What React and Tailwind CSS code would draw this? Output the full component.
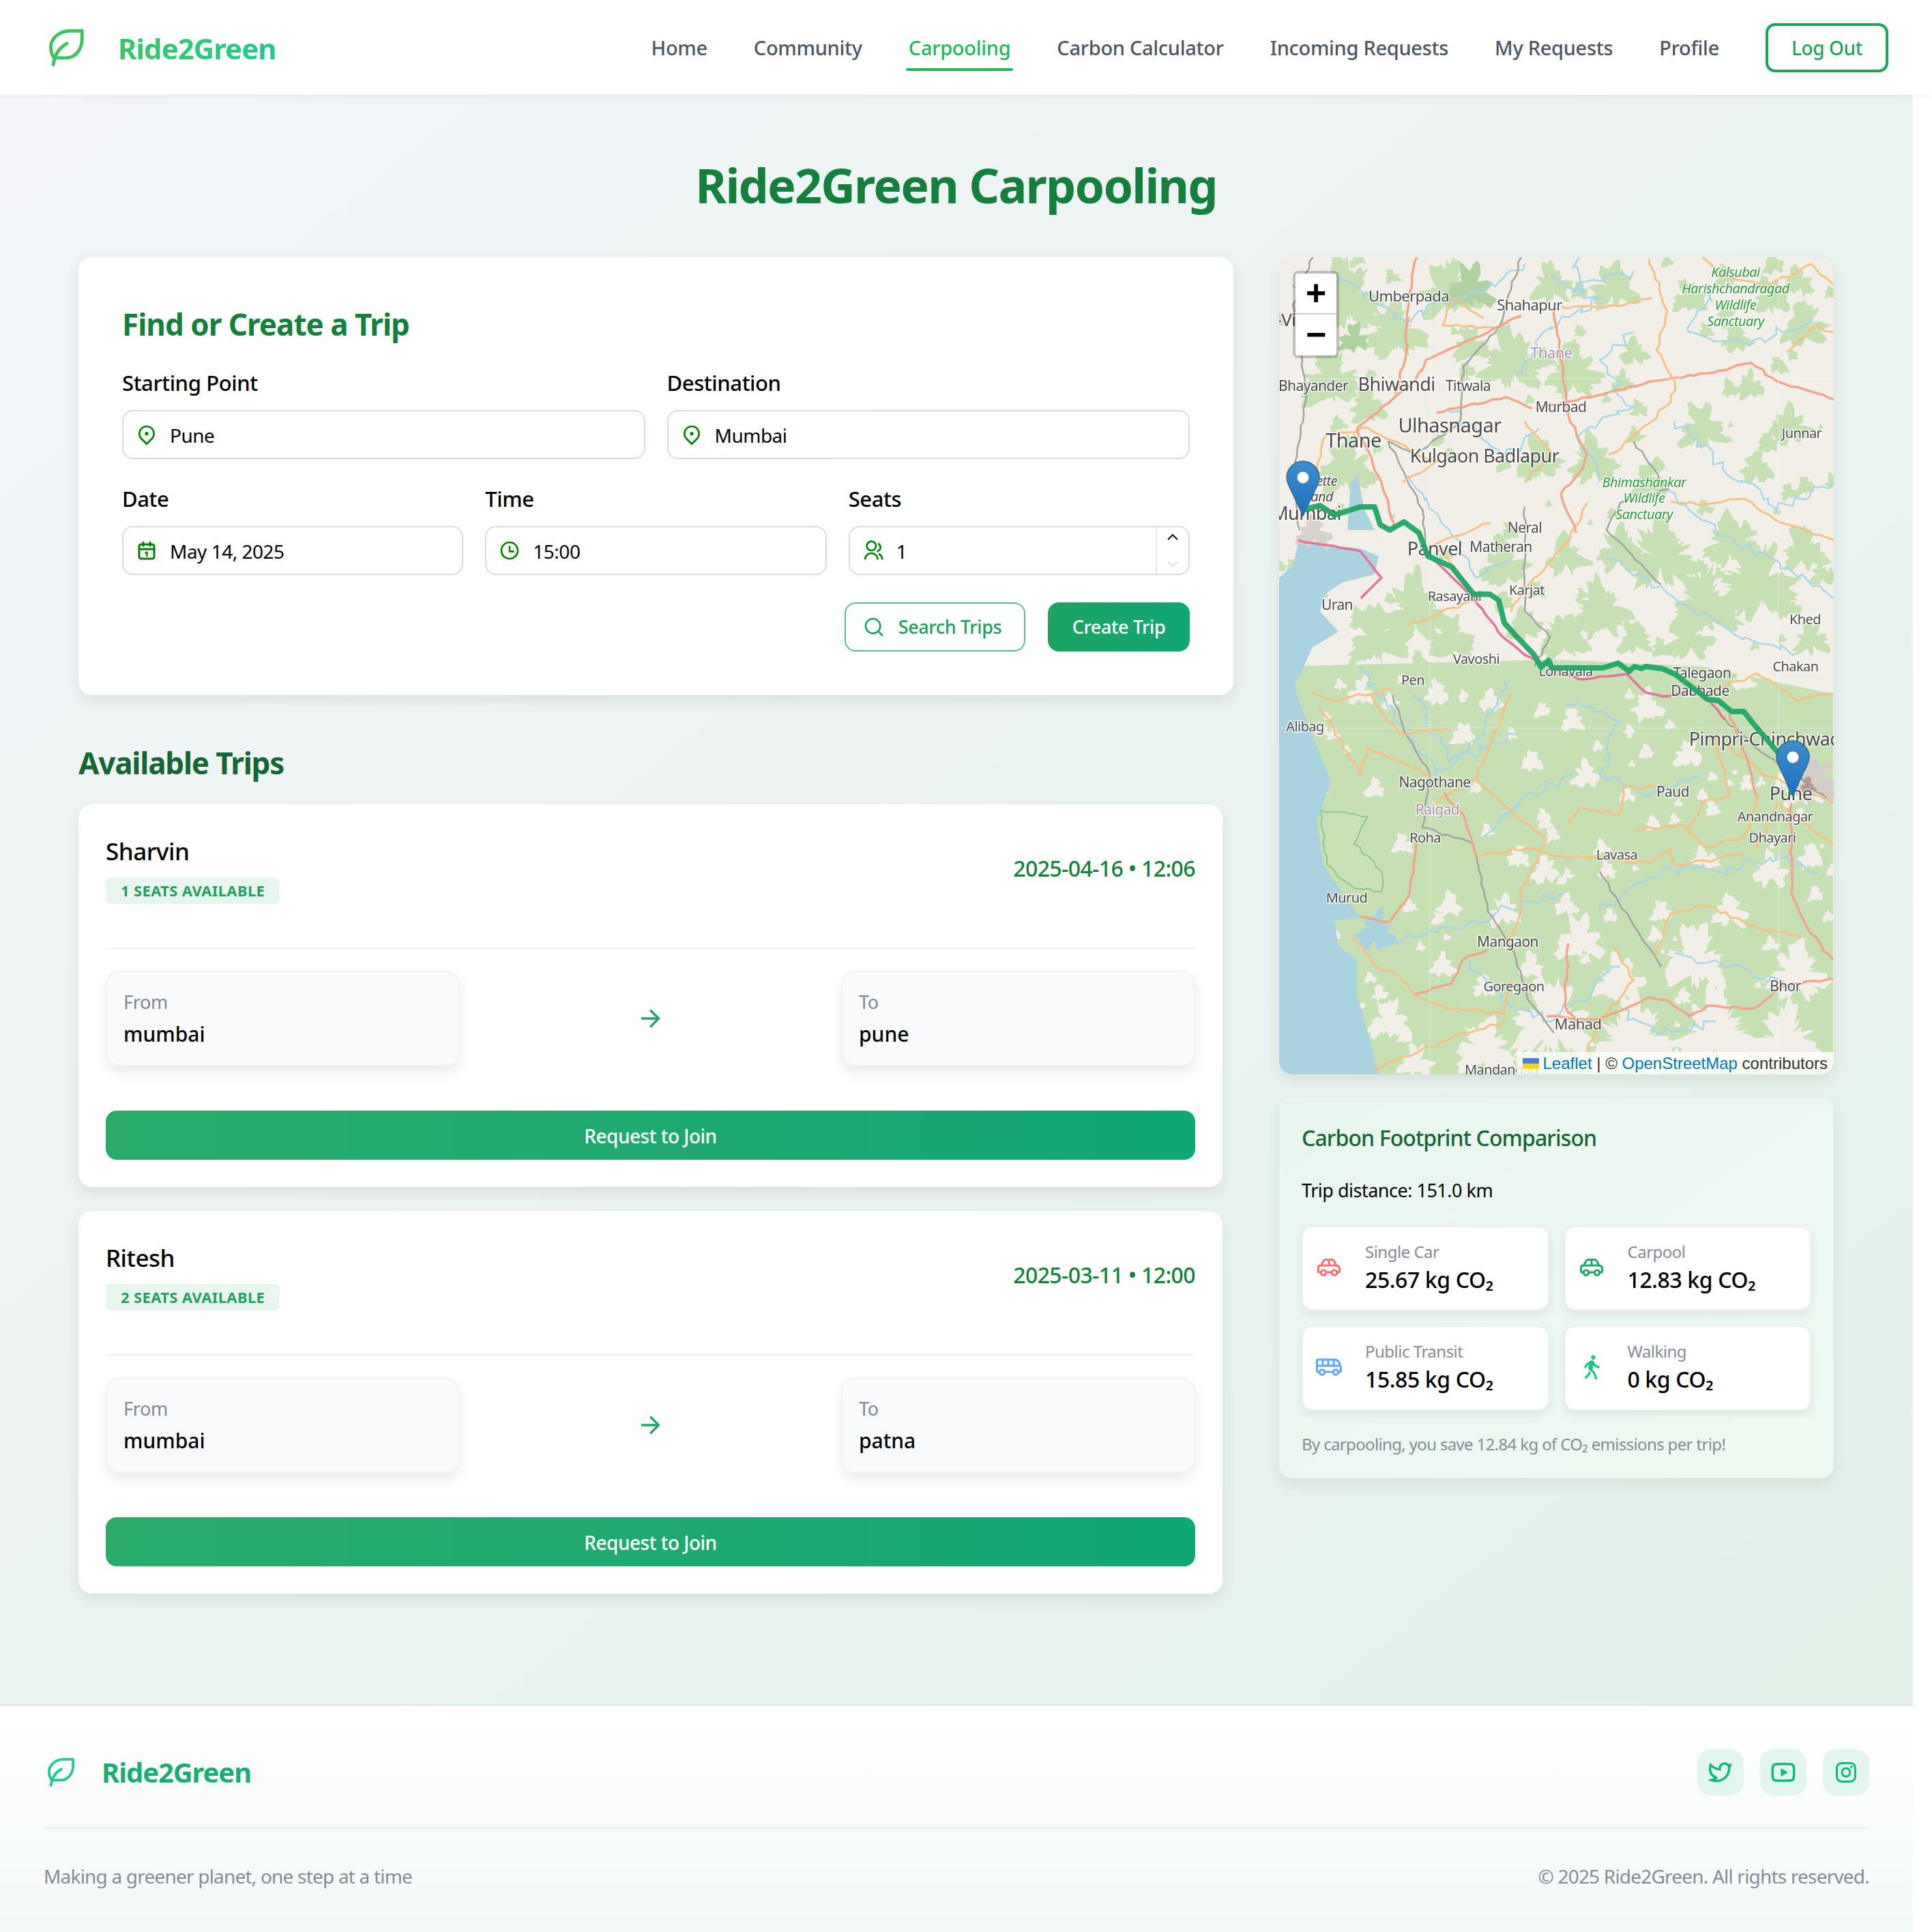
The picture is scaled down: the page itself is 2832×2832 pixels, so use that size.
import {
  RiMapPin2Line,
  RiTimeLine,
  RiGroupLine,
  RiSearchLine,
  RiArrowRightLine,
  RiWalkFill,
  RiTwitterLine,
  RiYoutubeLine,
  RiInstagramLine,
} from "react-icons/ri";

// SMALL SEEDED RANDOM, SO THE MAP IS THE SAME ON EVERY RENDER
const rng = (seed) => {
  let s = seed;
  return () => {
    s = (s * 16807) % 2147483647;
    return (s - 1) / 2147483646;
  };
};

// ROUGH CLOSED SHAPE FOR WOODS AND FIELDS
const blob = (cx, cy, r, seed) => {
  const rand = rng(seed * 97 + 13);
  const pts = [];
  const n = Math.max(10, Math.round(r * 1.2));
  const p1 = rand() * 6;
  const p2 = rand() * 6;
  for (let i = 0; i < n; i++) {
    const a = (i / n) * Math.PI * 2;
    const rr = r * (0.72 + 0.2 * Math.sin(a * 3 + p1) + 0.14 * Math.sin(a * 7 + p2) + (rand() - 0.5) * 0.34);
    pts.push(`${(cx + Math.cos(a) * rr).toFixed(1)},${(cy + Math.sin(a) * rr).toFixed(1)}`);
  }
  return `M${pts.join("L")}Z`;
};

// WOBBLY LINE FOR ROADS AND RIVERS
const wiggle = (points, amp, seed) => {
  const rand = rng(seed * 131 + 7);
  let d = `M${points[0][0]},${points[0][1]}`;
  for (let i = 1; i < points.length; i++) {
    const [x0, y0] = points[i - 1];
    const [x1, y1] = points[i];
    const steps = Math.max(1, Math.round(Math.hypot(x1 - x0, y1 - y0) / 10));
    for (let k = 1; k <= steps; k++) {
      const t = k / steps;
      const j = k === steps ? 0 : amp;
      d += `L${(x0 + (x1 - x0) * t + (rand() - 0.5) * j).toFixed(1)},${(y0 + (y1 - y0) * t + (rand() - 0.5) * j).toFixed(1)}`;
    }
  }
  return d;
};

// SCATTER SMALL PATCHES OVER A BOX
const scatter = (count, x0, y0, x1, y1, rMin, rMax, seed) => {
  const rand = rng(seed);
  return Array.from({ length: count }, () => [x0 + rand() * (x1 - x0), y0 + rand() * (y1 - y0), rMin + rand() * (rMax - rMin)]);
};

const NORTH_GREEN = [
  [100, 60, 60], [170, 110, 50], [250, 50, 50], [75, 180, 50], [340, 155, 55], [430, 170, 48], [490, 45, 40],
  [600, 60, 30], [770, 100, 40], [520, 140, 25], [100, 310, 50], [620, 250, 40], [380, 300, 40], [460, 300, 40],
  [700, 310, 30], [720, 60, 30], [760, 35, 25], [660, 420, 45], [560, 440, 60], [620, 510, 60], [700, 480, 70],
  [470, 520, 50], [500, 430, 40], [770, 430, 40], [780, 560, 30], [600, 560, 40], [200, 520, 60], [140, 560, 50],
  [250, 560, 40], [330, 450, 40], [420, 440, 35], [130, 220, 30], [280, 130, 30], [400, 40, 35], [670, 120, 25],
  [420, 560, 40], [520, 560, 30], [360, 540, 30], [750, 250, 35], [690, 190, 25], [540, 330, 30],
  ...scatter(110, 0, 0, 813, 600, 5, 20, 211),
];
const SOUTH_LAND = [
  [400, 1120, 70], [520, 1150, 70], [640, 1140, 70], [740, 1150, 60], [610, 1030, 55], [660, 960, 30], [760, 1050, 50],
  [300, 1160, 50], [440, 1000, 40], [500, 1060, 40], [250, 950, 22], [330, 960, 28], [160, 1120, 35], [200, 1180, 30],
  [390, 900, 25], [420, 950, 20], [350, 880, 20], [270, 700, 22], [230, 640, 22], [310, 650, 20], [120, 640, 22],
  [370, 740, 20], [450, 760, 24], [540, 660, 28], [430, 680, 20], [600, 730, 25], [720, 900, 30], [680, 620, 20],
  [770, 780, 30], [560, 960, 20], [480, 900, 16], [240, 1040, 22], [300, 1070, 20], [180, 860, 18], [140, 780, 18],
  [620, 880, 18], [780, 880, 22], [100, 1100, 22], [370, 1040, 22], [80, 700, 12],
  ...scatter(90, 60, 610, 813, 1198, 4, 15, 977),
];
const ORANGE_ROADS = [
  [[542, 2], [569, 79], [553, 136], [580, 182], [574, 213], [520, 262], [483, 289]],
  [[547, 60], [494, 71], [414, 73]],
  [[574, 358], [628, 362], [681, 354], [735, 389], [815, 415]],
  [[452, 360], [420, 420], [366, 480], [340, 520]],
  [[167, 634], [76, 650], [49, 638]],
  [[290, 765], [349, 820], [392, 852], [360, 919], [349, 978], [333, 1010]],
  [[296, 877], [371, 866], [403, 878], [547, 887], [574, 868], [580, 891], [681, 876]],
  [[520, 840], [590, 832], [622, 864], [681, 852], [703, 789]],
  [[553, 1026], [574, 962], [628, 951], [708, 986], [767, 996]],
  [[424, 836], [440, 808], [499, 816], [505, 777], [553, 777]],
  [[108, 994], [146, 1042], [172, 1050], [199, 1081]],
  [[199, 1081], [240, 1100], [330, 1110], [340, 1060]],
  [[140, 1190], [240, 1150], [330, 1120]],
  [[300, 90], [255, 60], [240, 100], [322, 105]],
  [[630, 640], [700, 610], [760, 650], [812, 640]],
  [[640, 700], [710, 760], [812, 800]],
  [[50, 330], [70, 260], [130, 250], [230, 300], [180, 330]],
  [[190, 540], [290, 500], [230, 420], [310, 390]],
  [[60, 660], [120, 760], [130, 720], [220, 760]],
  [[720, 40], [780, 10], [812, 40]],
  [[745, 140], [790, 100], [812, 110]],
  [[620, 0], [655, 30], [720, 40]],
  [[700, 870], [730, 800], [812, 860]],
  [[360, 240], [400, 290], [360, 330]],
  [[250, 690], [180, 700], [130, 640]],
  [[340, 640], [290, 760], [230, 800]],
  [[640, 700], [660, 790], [620, 800], [600, 850]],
  [[440, 1190], [470, 1120], [520, 1060], [490, 1010]],
];
const RED_ROADS = [
  [[202, 0], [190, 55], [185, 150], [170, 200]],
  [[355, 86], [322, 102], [215, 151], [199, 182], [114, 251]],
  [[376, 222], [563, 180], [628, 170], [692, 155], [730, 182], [815, 209]],
  [[231, 228], [333, 205], [371, 222]],
  [[403, 75], [419, 190], [424, 232], [451, 289], [446, 308], [413, 347], [435, 404]],
  [[751, 800], [751, 931], [778, 990], [812, 1030]],
  [[569, 1089], [601, 1113], [628, 1097], [697, 1101], [735, 1069], [812, 1057]],
  [[569, 1089], [542, 1085], [467, 1117], [392, 1113]],
  [[242, 785], [269, 816], [290, 880]],
  [[205, 852], [189, 939], [162, 974], [119, 967]],
  [[199, 1081], [253, 1065], [269, 1030], [306, 1014]],
  [[424, 1006], [419, 1097], [440, 1129]],
  [[114, 250], [150, 330], [170, 400]],
  [[660, 670], [690, 750], [700, 790]],
];
const PINK_ROADS = [
  [[440, 619], [510, 611], [537, 638], [563, 644], [617, 634], [654, 678]],
  [[28, 415], [119, 431], [150, 470], [120, 500]],
  [[226, 442], [285, 500], [328, 557], [360, 583], [440, 619]],
];
const GRAY_LINES = [
  [[167, 642], [183, 694], [221, 757], [210, 836], [285, 860], [306, 959], [344, 1018], [365, 1089], [403, 1137]],
  [[360, 366], [360, 519], [397, 557], [375, 600]],
  [[50, 0], [20, 70], [40, 200], [20, 320], [30, 400]],
  [[355, 0], [322, 102], [270, 160], [265, 240], [200, 290], [160, 270]],
  [[160, 270], [210, 370], [215, 440]],
  [[654, 678], [700, 720], [812, 800]],
  [[520, 270], [570, 340], [500, 360], [480, 400], [560, 480]],
  [[470, 900], [520, 980], [560, 1040]],
];
const RIVERS = [
  [[20, 40], [90, 30], [180, 90], [300, 50], [360, 10]],
  [[400, 30], [470, 60], [380, 120], [350, 170]],
  [[520, 110], [470, 150], [520, 220], [440, 260], [470, 330]],
  [[640, 40], [600, 110], [690, 130], [780, 90]],
  [[580, 240], [650, 310], [730, 370], [812, 330]],
  [[560, 340], [640, 400], [720, 440], [812, 500]],
  [[480, 440], [580, 500], [680, 560], [760, 580]],
  [[120, 600], [170, 670], [230, 760], [300, 700], [330, 620]],
  [[420, 650], [500, 680], [470, 760], [540, 790], [620, 760]],
  [[300, 850], [360, 790], [430, 760]],
  [[470, 960], [560, 900], [640, 900], [720, 880], [790, 900]],
  [[580, 1020], [680, 1040], [760, 1080]],
  [[140, 1010], [230, 990], [320, 960], [420, 930]],
  [[280, 1030], [330, 1090], [400, 1120], [500, 1040]],
  [[190, 320], [250, 400], [290, 470], [340, 440]],
  [[640, 1120], [560, 1140], [500, 1100]],
  [[250, 220], [330, 290], [380, 250]],
  [[440, 0], [430, 50], [520, 20]],
  [[200, 640], [250, 740], [350, 700]],
];
const SEA =
  "M0,470L20,452L28,419L65,421L119,427L146,438L140,465L92,477L65,496L60,519L87,549L49,572L22,630L49,702L76,769L55,828L65,891L97,939L119,968L81,972L87,1010L114,1030L114,1081L130,1137L146,1198L0,1198Z";
const ROUTE =
  "36,370 60,364 81,378 119,366 140,366 148,392 162,400 183,388 205,404 218,438 253,454 285,494 309,494 322,503 330,536 349,557 373,582 384,601 395,591 400,602 422,602 475,602 497,595 513,607 521,600 531,603 537,600 561,603 580,611 628,648 644,650 663,666 681,666 697,686 732,727 752,785";

// PLACE LABELS: [TEXT, X, Y, SIZE]
const PLACES = [
  ["Umberpada", 190, 65, 22], ["Shahapur", 367, 78, 22], ["Bhayander", 50, 196, 21], ["Bhiwandi", 172, 196, 27],
  ["Titwala", 277, 196, 21], ["Murbad", 413, 227, 21], ["Ulhasnagar", 250, 257, 29], ["Thane", 109, 279, 29],
  ["Kulgaon Badlapur", 301, 301, 27], ["Junnar", 766, 265, 20], ["Neral", 360, 404, 21], ["Matheran", 325, 432, 21],
  ["Panvel", 228, 437, 27], ["Karjat", 363, 495, 20], ["Rasayani", 257, 504, 20], ["Uran", 85, 517, 21],
  ["Khed", 771, 538, 20], ["Vavoshi", 289, 596, 20], ["Lonavala", 420, 614, 20], ["Talegaon", 620, 617, 21],
  ["Chakan", 757, 607, 20], ["Dabhade", 617, 643, 21], ["Pen", 196, 627, 20], ["Alibag", 38, 695, 20],
  ["Pimpri-Chinchwad", 712, 716, 27], ["Nagothane", 228, 777, 21], ["Paud", 577, 791, 21], ["Pune", 750, 796, 27],
  ["Anandnagar", 727, 827, 20], ["Dhayari", 723, 858, 20], ["Roha", 214, 858, 20], ["Lavasa", 495, 883, 20],
  ["Murud", 99, 946, 20], ["Mangaon", 335, 1011, 21], ["Goregaon", 344, 1076, 20], ["Bhor", 742, 1076, 21],
  ["Mahad", 438, 1132, 22], ["Mandangad", 326, 1198, 20], ["Mumbai", 40, 385, 27], ["-Vi", 10, 101, 26],
];
const PURPLE_PLACES = [["Thane", 399, 148, 22], ["Raigad", 232, 817, 21]];
const PARKS = [
  ["Kalsubai", 669, 29], ["Harishchandragad", 669, 53], ["Wildlife", 669, 77], ["Sanctuary", 669, 101],
  ["Bhimashankar", 535, 337], ["Wildlife", 535, 360], ["Sanctuary", 535, 384],
];

const Marker = ({ x, y }) => (
  <g transform={`translate(${x} ${y})`}>
    <path
      d="M25 1C12 1 1 12 1 25c0 6 3 12 7 20l17 36 17-36c4-8 7-14 7-20C49 12 38 1 25 1z"
      fill="url(#markerFill)"
      stroke="#2e6c97"
      strokeWidth="1.5"
    />
    <circle cx="25" cy="25" r="8.5" fill="#fff" />
  </g>
);

const RouteMap = () => (
  <div className="relative h-[1198px] w-[813px] overflow-hidden rounded-[20px] shadow-[0_8px_20px_rgba(0,0,0,0.08)]">
    {/* MAP DRAWING */}
    <svg width="813" height="1198" viewBox="0 0 813 1198" className="block">
      <defs>
        <linearGradient id="markerFill" x1="0" y1="0" x2="0" y2="1">
          <stop offset="0" stopColor="#3d8ec9" />
          <stop offset="1" stopColor="#1f6fc0" />
        </linearGradient>
      </defs>
      <rect width="813" height="1198" fill="#f2efe9" />
      <g className="blur-[0.7px]">
        {/* SOUTH IS MOSTLY WOODS, NORTH MOSTLY OPEN */}
        <path d="M0,600L400,590L620,600L812,640L812,1198L0,1198Z" fill="#c6dfb3" />
        {SOUTH_LAND.map(([x, y, r], i) => (
          <path key={i} d={blob(x, y, r, i + 1)} fill="#f2efe9" />
        ))}
        {NORTH_GREEN.map(([x, y, r], i) => (
          <path key={i} d={blob(x, y, r, i + 60)} fill="#c6dfb3" />
        ))}
        <path d={blob(280, 45, 40, 9)} fill="#afd29f" />
        <path d={blob(110, 120, 26, 5)} fill="#afd29f" />
        <path
          d={wiggle([[60, 810], [130, 820], [110, 860], [150, 900], [150, 930], [110, 925], [70, 890], [60, 810]], 5, 4)}
          fill="#c9e1b6"
          stroke="#8fc78a"
          strokeWidth="2"
        />
        <path d={SEA} fill="#aad3df" />
        <path d="M100,400L105,330L115,320L125,370L140,400Z" fill="#aad3df" />
        <path d={blob(142, 990, 34, 8)} fill="#aad3df" />
        {/* BUILT-UP PATCHES */}
        <path d={blob(785, 770, 40, 2)} fill="#d3cfc8" />
        <path d={blob(50, 405, 30, 6)} fill="#d6d2cc" />
        <path d={blob(775, 775, 14, 12)} fill="#b79a86" />
        {RIVERS.map((p, i) => (
          <path key={i} d={wiggle(p, 16, i + 30)} fill="none" stroke="#a9d6e6" strokeWidth="2.5" />
        ))}
        {GRAY_LINES.map((p, i) => (
          <path key={i} d={wiggle(p, 4, i + 20)} fill="none" stroke="#a3a39e" strokeWidth="2.5" />
        ))}
        {ORANGE_ROADS.map((p, i) => (
          <path key={i} d={wiggle(p, 6, i + 40)} fill="none" stroke="#f6c184" strokeWidth="3" />
        ))}
        {RED_ROADS.map((p, i) => (
          <path key={i} d={wiggle(p, 4, i + 70)} fill="none" stroke="#f1a68a" strokeWidth="3.5" />
        ))}
        {PINK_ROADS.map((p, i) => (
          <path key={i} d={wiggle(p, 2, i + 90)} fill="none" stroke="#e2749a" strokeWidth="3.5" />
        ))}
        {/* TILE SEAMS */}
        <path d="M221,0V1198M732,0V1198M0,178H813M0,690H813" stroke="#fff" strokeOpacity="0.45" strokeWidth="1" />
        {/* LABELS */}
        <g
          textAnchor="middle"
          fontFamily="'Noto Sans', sans-serif"
          fill="#4a4a4a"
          stroke="#ffffff"
          strokeOpacity="0.75"
          strokeWidth="3"
          paintOrder="stroke"
          letterSpacing="-0.6"
        >
          {PLACES.map(([t, x, y, s]) => (
            <text key={t + x} x={x} y={y} fontSize={s}>
              {t}
            </text>
          ))}
          <text x="85" y="335" fontSize="20" textAnchor="end" fontStyle="italic">Salsette</text>
          <text x="79" y="358" fontSize="20" textAnchor="end" fontStyle="italic">Island</text>
          {PURPLE_PLACES.map(([t, x, y, s]) => (
            <text key={t + x} x={x} y={y} fontSize={s} fill="#a98fb0">
              {t}
            </text>
          ))}
          {PARKS.map(([t, x, y]) => (
            <text key={t + y} x={x} y={y} fontSize="20" fontStyle="italic" fill="#2f9a3c">
              {t}
            </text>
          ))}
        </g>
      </g>
      {/* ROUTE AND MARKERS */}
      <polyline points={ROUTE} fill="none" stroke="#22a566" strokeOpacity="0.95" strokeWidth="8" strokeLinejoin="round" strokeLinecap="round" />
      <Marker x={10} y={298} />
      <Marker x={728} y={708} />
    </svg>
    {/* ZOOM CONTROL */}
    <div className="absolute left-[20px] top-[20px] flex w-[68px] flex-col rounded-[8px] border-4 border-black/20 bg-clip-padding font-['Liberation_Mono',monospace] text-[52px] font-bold leading-none text-black">
      <span className="flex h-[60px] items-center justify-center rounded-t-[4px] border-b-2 border-[#cccccc] bg-white pt-[8px]">+</span>
      <span className="flex h-[60px] items-center justify-center rounded-b-[4px] bg-white pt-[8px]">−</span>
    </div>
    {/* ATTRIBUTION */}
    <div className="absolute bottom-0 right-0 flex h-[33px] items-center gap-[7px] bg-white/80 pl-[9px] pr-[9px] font-['Liberation_Sans',sans-serif] text-[24px] text-[#333333]">
      <svg width="24" height="16" viewBox="0 0 12 8" className="mr-[-1px]">
        <rect width="12" height="4" fill="#4C7BE1" />
        <rect y="4" width="12" height="4" fill="#FFD500" />
      </svg>
      <span>
        <span className="text-[#0078a8]">Leaflet</span> | © <span className="text-[#0078a8]">OpenStreetMap</span> contributors
      </span>
    </div>
  </div>
);

// ICONS THE PACKAGES HAVE NO MATCH FOR
const LeafIcon = ({ className }) => (
  <svg viewBox="0 0 42 44" fill="none" stroke="currentColor" strokeWidth="4" strokeLinecap="round" strokeLinejoin="round" className={className}>
    <path d="M39 2H25C11 2 2 12 2 21c0 5 1 9 4 13h14C32 34 39 23 39 11Z" />
    <path d="M5 42c1-9 5-19 16-25" />
  </svg>
);

const CalendarIcon = ({ className }) => (
  <svg viewBox="0 0 26 28" fill="none" stroke="currentColor" strokeWidth="3" strokeLinecap="round" strokeLinejoin="round" className={className}>
    <rect x="2" y="5" width="22" height="21" rx="3" />
    <path d="M2 12h22M8 2v5M18 2v5" />
    <path d="M11.5 17.5 13.5 16.5V22" strokeWidth="2.4" />
  </svg>
);

const CarIcon = ({ className }) => (
  <svg viewBox="0 0 34 26" fill="none" stroke="currentColor" strokeWidth="3" strokeLinecap="round" strokeLinejoin="round" className={className}>
    <path d="M5 20H3a1.5 1.5 0 0 1-1.5-1.5V13c0-2 1-3 3-3h1L9 3.5C9.7 2 10.5 1.5 12 1.5h9.5c1.3 0 2 .5 2.8 1.6L28 10c3 .5 4.5 1.8 4.5 4v4.5A1.5 1.5 0 0 1 31 20h-2M13 20h8" />
    <path d="M6 10h22M17 2v8" />
    <circle cx="9" cy="20.5" r="3.7" />
    <circle cx="25" cy="20.5" r="3.7" />
  </svg>
);

const BusIcon = ({ className }) => (
  <svg viewBox="0 0 38 26" fill="none" stroke="currentColor" strokeWidth="3" strokeLinecap="round" strokeLinejoin="round" className={className}>
    <path d="M5 20H3a1.5 1.5 0 0 1-1.5-1.5v-15A1.5 1.5 0 0 1 3 2h24c4 0 7 3 8.5 8 .6 2 1 4 1 6v2.5A1.5 1.5 0 0 1 35 20h-2M14 20h10" />
    <path d="M2 11h33M10 2v9M18 2v9M26 2v9" />
    <circle cx="9" cy="20.5" r="3.7" />
    <circle cx="29" cy="20.5" r="3.7" />
  </svg>
);

const Field = ({ label, icon: Icon, value, iconClass = "h-[32px] w-[32px]", children }) => (
  <div className="flex min-w-0 flex-1 flex-col">
    <span className="mb-[18px] h-[44px] text-[31px] font-medium leading-[44px] tracking-[-0.4px] text-black">{label}</span>
    <div className="relative flex h-[72px] items-center rounded-[16px] border-2 border-[#d9dce2] bg-white pl-[18px]">
      <span className="flex w-[32px] shrink-0 justify-center text-[#008000]">
        <Icon className={iconClass} />
      </span>
      <span className="ml-[18px] pt-[2px] text-[28px] leading-[40px] tracking-[-0.5px] text-black">{value}</span>
      {children}
    </div>
  </div>
);

const Place = ({ label, value }) => (
  <div className="flex h-[140px] w-[519px] flex-col justify-center rounded-[20px] border-2 border-[#f1f2f5] bg-[#f9fafb] px-[24px] shadow-[0_10px_20px_rgba(0,0,0,0.08)]">
    <span className="text-[27px] leading-[42px] tracking-[-0.3px] text-[#7f8792]">{label}</span>
    <span className="pt-[3px] text-[30px] font-medium leading-[46px] text-black">{value}</span>
  </div>
);

const TripCard = ({ name, seats, when, to }) => (
  <div className="rounded-[20px] bg-white p-[40px] shadow-[0_8px_20px_rgba(0,0,0,0.08)]">
    <div className="flex items-center justify-between border-b-2 border-[#eeeff2] pb-[64px]">
      <div className="flex flex-col items-start">
        <span className="h-[58px] text-[35px] font-medium leading-[58px] tracking-[-0.5px] text-black">{name}</span>
        <span className="mt-[9px] flex h-[39px] items-center rounded-[8px] bg-[#e9f6ef] px-[22px] text-[22px] font-bold tracking-[0.35px] text-[#22a05f]">
          {seats} SEATS AVAILABLE
        </span>
      </div>
      <span className="pt-[2px] text-[32px] font-medium tracking-[-0.6px] text-[#15803d]">{when}</span>
    </div>
    <div className="mt-[32px] flex items-center justify-between">
      <Place label="From" value="mumbai" />
      <RiArrowRightLine className="h-[42px] w-[42px] text-[#22a566]" />
      <Place label="To" value={to} />
    </div>
    <button className="mt-[65px] flex h-[72px] w-full items-center justify-center rounded-[16px] bg-gradient-to-r from-[#2aab6a] to-[#10a676] pt-[2px] text-[28px] font-medium tracking-[-0.5px] text-white">
      Request to Join
    </button>
  </div>
);

const CO2Tile = ({ icon: Icon, iconClass, color, label, value }) => (
  <div className="flex items-center rounded-[16px] border-2 border-[#eef1f0] bg-white pb-[3px] pl-[18px] shadow-[0_6px_14px_rgba(0,0,0,0.07)]">
    <span className="flex w-[40px] shrink-0 justify-center" style={{ color }}>
      <Icon className={iconClass} />
    </span>
    <div className="ml-[33px] flex flex-col">
      <span className="text-[24px] leading-[36px] tracking-[-0.5px] text-[#858b96]">{label}</span>
      <span className="text-[32px] font-medium leading-[46px] tracking-[-0.4px] text-black">{value}</span>
    </div>
  </div>
);

const NAV_LINKS = ["Home", "Community", "Carpooling", "Carbon Calculator", "Incoming Requests", "My Requests", "Profile"];

export default function App() {
  return (
    <div className="flex w-[2832px] flex-col bg-white font-['Noto_Sans',sans-serif]">
      {/* NAVBAR */}
      <nav className="relative z-10 flex h-[139px] items-center justify-between bg-white pl-[72px] pr-[64px] shadow-[0_2px_10px_rgba(0,0,0,0.06)]">
        <div className="flex items-center">
          <LeafIcon className="h-[56px] w-[52px] text-[#3ec45e]" />
          <span className="ml-[49px] bg-gradient-to-r from-[#3cc566] to-[#20c98d] bg-clip-text pt-[2px] text-[42px] font-bold tracking-[-1px] text-transparent">
            Ride2Green
          </span>
        </div>
        <div className="flex items-center gap-[68px]">
          {NAV_LINKS.map((l) =>
            l === "Carpooling" ? (
              <span key={l} className="relative mx-[-4px] px-[4px] text-[29px] font-medium tracking-[-0.3px] text-[#22b85a]">
                {l}
                <span className="absolute bottom-[-13px] left-0 h-[4px] w-full rounded bg-[#22b85a]" />
              </span>
            ) : (
              <span key={l} className="text-[29px] font-medium tracking-[-0.3px] text-[#4b5563]">
                {l}
              </span>
            )
          )}
          <span className="flex h-[72px] w-[180px] items-center justify-center rounded-[14px] border-4 border-[#1fa35c] text-[28px] font-medium tracking-[-0.4px] text-[#1fa35c] shadow-[0_3px_6px_rgba(0,0,0,0.08)]">
            Log Out
          </span>
        </div>
      </nav>

      <div className="pr-[28px]">
        <main className="h-[2359px] bg-gradient-to-br from-[#f3f5f9] to-[#e3f1e9] pl-[115px] pr-[116px] pt-[82px]">
          <h1 className="h-[100px] text-center text-[70px] font-bold leading-[100px] tracking-[-1.8px] text-[#15803d]">Ride2Green Carpooling</h1>
          <div className="mt-[56px] flex gap-[67px]">
            {/* LEFT COLUMN */}
            <div className="w-[1693px]">
              <section className="rounded-[20px] bg-white/95 px-[64px] pb-[64px] pt-[64px] shadow-[0_8px_20px_rgba(0,0,0,0.08)]">
                <h2 className="h-[68px] text-[44px] font-bold leading-[68px] tracking-[-1px] text-[#15803d]">Find or Create a Trip</h2>
                <div className="mt-[30px] flex gap-[32px]">
                  <Field label="Starting Point" icon={RiMapPin2Line} value="Pune" />
                  <Field label="Destination" icon={RiMapPin2Line} value="Mumbai" />
                </div>
                <div className="mt-[36px] flex gap-[32px]">
                  <Field label="Date" icon={CalendarIcon} iconClass="h-[28px] w-[26px]" value="May 14, 2025" />
                  <Field label="Time" icon={RiTimeLine} value="15:00" />
                  <Field label="Seats" icon={RiGroupLine} value="1">
                    {/* NUMBER SPINNER */}
                    <div className="absolute bottom-0 right-0 top-0 flex w-[48px] flex-col items-center justify-between border-l-2 border-[#e7e8ec] py-[6px]">
                      <svg width="18" height="18" viewBox="0 0 18 18" fill="none" stroke="#111" strokeWidth="2">
                        <path d="M2 12L9 5l7 7" />
                      </svg>
                      <svg width="18" height="18" viewBox="0 0 18 18" fill="none" stroke="#dfe1e5" strokeWidth="2">
                        <path d="M2 6l7 7 7-7" />
                      </svg>
                    </div>
                  </Field>
                </div>
                <div className="mt-[40px] flex justify-end gap-[33px]">
                  <button className="flex h-[72px] w-[265px] items-center justify-center gap-[20px] rounded-[16px] border-2 border-[#5cbc8a] pr-[8px] text-[27px] font-medium tracking-[-0.4px] text-[#1f9d60]">
                    <RiSearchLine className="h-[32px] w-[32px]" />
                    Search Trips
                  </button>
                  <button className="h-[72px] w-[208px] rounded-[16px] bg-gradient-to-r from-[#1ea362] to-[#10a676] text-[27px] font-medium tracking-[-0.4px] text-white">
                    Create Trip
                  </button>
                </div>
              </section>

              <h2 className="mt-[69px] h-[60px] text-[44px] font-bold leading-[60px] tracking-[-1.2px] text-[#166534]">Available Trips</h2>
              <div className="mt-[31px] flex w-[1677px] flex-col gap-[35px]">
                <TripCard name="Sharvin" seats={1} when="2025-04-16 • 12:06" to="pune" />
                <TripCard name="Ritesh" seats={2} when="2025-03-11 • 12:00" to="patna" />
              </div>
            </div>

            {/* RIGHT COLUMN */}
            <div className="w-[813px]">
              <RouteMap />
              <section className="mt-[34px] h-[558px] rounded-[20px] bg-gradient-to-br from-[#e9f6ef] to-[#eef9f2] px-[33px] pt-[35px] shadow-[0_8px_20px_rgba(0,0,0,0.08)]">
                <h3 className="h-[48px] text-[32px] font-medium leading-[48px] tracking-[-0.9px] text-[#166534]">Carbon Footprint Comparison</h3>
                <p className="mt-[31px] h-[44px] text-[27px] leading-[44px] tracking-[-0.5px] text-black">Trip distance: 151.0 km</p>
                <div className="mt-[30px] grid grid-cols-2 grid-rows-[124px_125px] gap-[22px]">
                  <CO2Tile icon={CarIcon} iconClass="h-[26px] w-[34px]" color="#f87171" label="Single Car" value="25.67 kg CO₂" />
                  <CO2Tile icon={CarIcon} iconClass="h-[26px] w-[34px]" color="#22a566" label="Carpool" value="12.83 kg CO₂" />
                  <CO2Tile icon={BusIcon} iconClass="h-[26px] w-[38px]" color="#60a5fa" label="Public Transit" value="15.85 kg CO₂" />
                  <CO2Tile icon={RiWalkFill} iconClass="h-[44px] w-[44px]" color="#20c58a" label="Walking" value="0 kg CO₂" />
                </div>
                <p className="mt-[31px] h-[36px] text-[24px] leading-[36px] tracking-[-0.65px] text-[#858b96]">By carpooling, you save 12.84 kg of CO₂ emissions per trip!</p>
              </section>
            </div>
          </div>
        </main>

        {/* FOOTER */}
        <footer className="h-[334px] border-t-2 border-[#d2e8e4] bg-gradient-to-b from-white to-[#f3f9f8] px-[64px] pt-[64px]">
          <div className="flex h-[117px] items-start justify-between border-b-2 border-[#eef1f2]">
            <div className="flex h-[68px] items-center pl-[6px]">
              <LeafIcon className="h-[42px] w-[40px] text-[#20c997]" />
              <span className="ml-[39px] text-[40px] font-bold tracking-[-1.1px] text-[#1aad72]">Ride2Green</span>
            </div>
            <div className="flex gap-[24px]">
              <span className="flex h-[68px] w-[68px] items-center justify-center rounded-[20px] bg-[#e2f5ef] text-[#10b981]">
                <RiTwitterLine className="h-[42px] w-[42px]" />
              </span>
              <span className="flex h-[68px] w-[68px] items-center justify-center rounded-[20px] bg-[#e2f5ef] text-[#10b981]">
                <RiYoutubeLine className="h-[42px] w-[42px]" />
              </span>
              <span className="flex h-[68px] w-[68px] items-center justify-center rounded-[20px] bg-[#e2f5ef] text-[#10b981]">
                <RiInstagramLine className="h-[36px] w-[36px]" />
              </span>
            </div>
          </div>
          <div className="flex items-center justify-between pt-[47px] text-[28px] leading-[44px] tracking-[-0.8px] text-[#858b96]">
            <span>Making a greener planet, one step at a time</span>
            <span>© 2025 Ride2Green. All rights reserved.</span>
          </div>
        </footer>
      </div>
    </div>
  );
}
